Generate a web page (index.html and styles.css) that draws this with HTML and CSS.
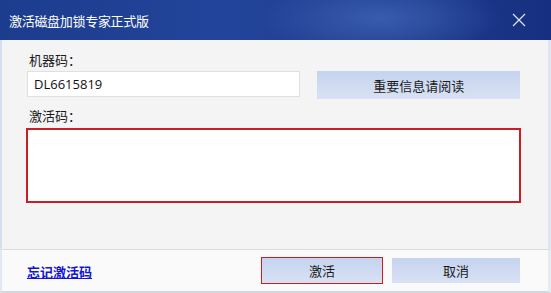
FILE: index.html
```html
<!DOCTYPE html>
<html lang="zh-CN">
<head>
<meta charset="utf-8">
<title>激活磁盘加锁专家正式版</title>
<link rel="stylesheet" href="styles.css">
</head>
<body>
<div class="window">
  <div class="titlebar">
    <span class="title">激活磁盘加锁专家正式版</span>
    <svg class="close" width="14" height="14" viewBox="0 0 14 14"><path d="M1 1L13 13M13 1L1 13" stroke="#dfe6f4" stroke-width="1.2" fill="none"/></svg>
  </div>
  <div class="content">
    <div class="label">机器码：</div>
    <div class="row">
      <div class="input">DL6615819</div>
      <div class="btn btn-info">重要信息请阅读</div>
    </div>
    <div class="label label2">激活码：</div>
    <div class="textarea"></div>
  </div>
  <div class="footer">
    <a class="link" href="#">忘记激活码</a>
    <div class="actions">
      <div class="btn btn-activate">激活</div>
      <div class="btn btn-cancel">取消</div>
    </div>
  </div>
</div>
</body>
</html>
```
FILE: styles.css
```css
html, body {
  margin: 0;
  padding: 0;
  width: 551px;
  height: 293px;
  overflow: hidden;
  background: #f4f4f4;
}
.window {
  width: 551px;
  height: 293px;
  display: flex;
  flex-direction: column;
  font-family: "Noto Sans CJK SC", "Noto Sans", sans-serif;
  font-size: 13px;
  color: #1a1a1a;
}
.titlebar {
  height: 40px;
  flex: none;
  display: flex;
  align-items: center;
  justify-content: space-between;
  padding: 0 25px 0 9px;
  background: radial-gradient(ellipse 120px 40px at 380px 18px, #3a5cae 0%, rgba(58,92,174,0) 100%),
              linear-gradient(90deg, #1c3c8e 0%, #22449a 40%, #1e3d90 70%, #172f80 100%);
}
.title {
  color: #ffffff;
  font-size: 13px;
  letter-spacing: -0.3px;
}
.close {
  display: block;
}
.content {
  flex: 1;
  background: #f4f4f4;
  border-left: 2px solid #d4e0ee;
  border-right: 3px solid #dde6f1;
  padding: 10px 28px 0 25px;
  display: flex;
  flex-direction: column;
}
.label {
  height: 20px;
  line-height: 20px;
  padding-left: 2px;
}
.label2 {
  margin-top: 7px;
}
.row {
  display: flex;
  align-items: flex-start;
  gap: 17px;
  margin-top: 1px;
}
.input {
  width: 266px;
  height: 24px;
  line-height: 24px;
  padding-left: 6px;
  background: #fff;
  border: 1px solid #e0e0e0;
  font-family: "Open Sans", "Noto Sans", sans-serif;
  font-size: 13px;
  color: #111;
}
.btn {
  display: flex;
  align-items: center;
  justify-content: center;
  background: linear-gradient(180deg, #c5d3ee 0%, #d9e2f4 100%);
  color: #1a1a1a;
  box-sizing: border-box;
}
.btn-info {
  width: 203px;
  height: 28px;
}
.textarea {
  margin-top: 2px;
  width: 495px;
  height: 75px;
  box-sizing: border-box;
  background: #fff;
  border: 2px solid #cc1d25;
  margin-left: -1px;
}
.footer {
  height: 41px;
  flex: none;
  border-top: 1px solid #d9dde3;
  border-bottom: 2px solid #d3d8df;
  border-left: 2px solid #e1e8f1;
  border-right: 3px solid #e6ecf3;
  background: #fafafa;
  display: flex;
  align-items: center;
  justify-content: space-between;
  padding: 0 28px 0 25px;
}
.link {
  color: #1414d8;
  text-decoration: underline;
  font-weight: bold;
  font-size: 13px;
  margin-top: 2px;
}
.actions {
  display: flex;
  gap: 9px;
  align-items: center;
}
.btn-activate {
  width: 122px;
  height: 27px;
  border: 1px solid #d01a22;
}
.btn-cancel {
  width: 128px;
  height: 25px;
}
```
